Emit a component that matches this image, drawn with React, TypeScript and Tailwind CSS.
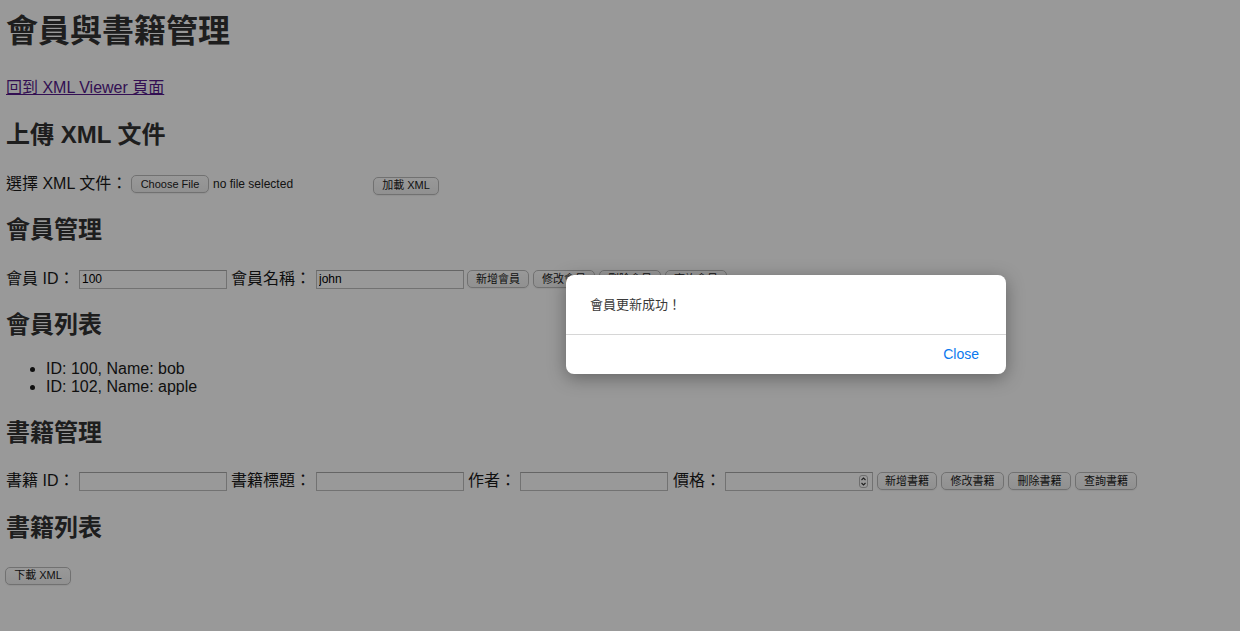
import React from 'react';

const btn =
  'h-[18px] rounded-[5px] border border-[#bdbdbd] bg-linear-to-b from-white to-[#f1f1f1] px-[6px] text-[11px] leading-none text-[#222] shadow-[0_1px_1px_rgba(0,0,0,0.06)] shrink-0';
const input = 'h-[19px] w-[148px] shrink-0 border border-[#bfbfbf] border-t-[#a8a8a8] bg-white px-[2px] text-[12px] leading-none text-black';
const h2 = 'text-[24px] font-bold leading-[28px] text-[#333]';

function Btn({ label, w }: { label: string; w: number }) {
  return (
    <button className={btn} style={{ width: w }}>
      {label}
    </button>
  );
}

function NumberInput() {
  return (
    <div className="relative h-[19px] w-[148px] shrink-0 border border-[#bfbfbf] border-t-[#a8a8a8] bg-white">
      {/* stepper */}
      <div className="absolute right-[4px] top-[2px] flex h-[13px] w-[9px] flex-col items-center justify-center rounded-[3px] border border-[#b8b8b8]">
        <svg width="7" height="11" viewBox="0 0 7 11" fill="none" stroke="#333" strokeWidth="1.1">
          <path d="M1.5 4 L3.5 2 L5.5 4" />
          <path d="M1.5 7 L3.5 9 L5.5 7" />
        </svg>
      </div>
    </div>
  );
}

export default function App() {
  return (
    <div className="relative min-h-[631px] w-full bg-white font-['Liberation_Sans','Noto_Sans_CJK_TC',sans-serif] text-[#1a1a1a]">
      <div className="px-[6px] pt-[13px]">
        <h1 className="text-[32px] font-bold leading-[37px] text-[#333]">會員與書籍管理</h1>

        <div className="mt-[29px] text-[16px] leading-[18px]">
          <a href="#" className="text-[#551a8b] underline">
            回到 XML Viewer 頁面
          </a>
        </div>

        {/* upload */}
        <h2 className={`mt-[24px] ${h2}`}>上傳 XML 文件</h2>
        <div className="mt-[25px] flex h-[20px] items-center text-[16px]">
          <span className="w-[125px] shrink-0">選擇 XML 文件：</span>
          <div className="flex w-[238px] shrink-0 items-center">
            <button className={`${btn} h-[16px] w-[78px]`}>Choose File</button>
            <span className="ml-[4px] text-[12px] text-[#222]">no file selected</span>
          </div>
          <div className="ml-[4px]">
            <Btn label="加載 XML" w={66} />
          </div>
        </div>

        {/* members */}
        <h2 className={`mt-[22px] ${h2}`}>會員管理</h2>
        <div className="mt-[25px] flex h-[20px] items-center text-[16px]">
          <span className="w-[73px] shrink-0">會員 ID：</span>
          <input className={input} defaultValue="100" />
          <span className="w-[89px] shrink-0 pl-[4px]">會員名稱：</span>
          <input className={input} defaultValue="john" />
          <div className="ml-[3px] flex gap-[4px]">
            <Btn label="新增會員" w={62} />
            <Btn label="修改會員" w={62} />
            <Btn label="刪除會員" w={62} />
            <Btn label="查詢會員" w={62} />
          </div>
        </div>

        <h2 className={`mt-[22px] ${h2}`}>會員列表</h2>
        <ul className="mt-[21px] list-disc pl-[40px] text-[16px] leading-[18px]">
          <li>ID: 100, Name: bob</li>
          <li>ID: 102, Name: apple</li>
        </ul>

        {/* books */}
        <h2 className={`mt-[23px] ${h2}`}>書籍管理</h2>
        <div className="mt-[24px] flex h-[20px] items-center text-[16px]">
          <span className="w-[73px] shrink-0">書籍 ID：</span>
          <input className={input} />
          <span className="w-[89px] shrink-0 pl-[4px]">書籍標題：</span>
          <input className={input} />
          <span className="w-[56px] shrink-0 pl-[4px]">作者：</span>
          <input className={input} />
          <span className="w-[57px] shrink-0 pl-[5px]">價格：</span>
          <NumberInput />
          <div className="ml-[4px] flex gap-[4px]">
            <Btn label="新增書籍" w={60} />
            <Btn label="修改書籍" w={63} />
            <Btn label="刪除書籍" w={63} />
            <Btn label="查詢書籍" w={62} />
          </div>
        </div>

        <h2 className={`mt-[23px] ${h2}`}>書籍列表</h2>
        <div className="-ml-[1px] mt-[20px]">
          <Btn label="下載 XML" w={66} />
        </div>
      </div>

      {/* alert backdrop */}
      <div className="absolute inset-0 bg-black/40" />

      {/* alert dialog */}
      <div className="absolute left-[566px] top-[275px] w-[440px] overflow-hidden rounded-[8px] bg-white shadow-[0_4px_18px_rgba(0,0,0,0.35)]">
        <div className="flex h-[59px] items-center pl-[24px] text-[13px] text-[#3a3a3a]">會員更新成功！</div>
        <div className="flex h-[40px] items-center justify-end border-t border-[#d6d6d6] pr-[27px]">
          <span className="text-[14px] text-[#0a79ee]">Close</span>
        </div>
      </div>
    </div>
  );
}
